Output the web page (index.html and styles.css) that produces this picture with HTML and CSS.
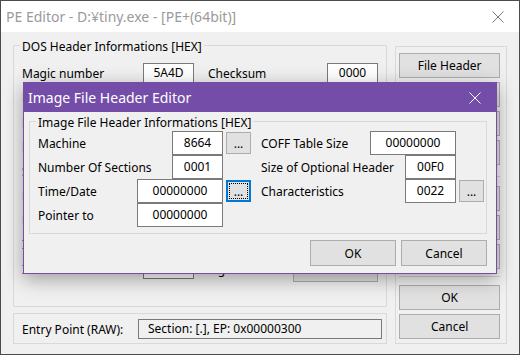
FILE: index.html
```html
<!DOCTYPE html>
<html lang="en">
<head>
<meta charset="UTF-8">
<title>PE Editor</title>
<link rel="stylesheet" href="styles.css">
</head>
<body>
<div class="window">
  <div class="titlebar">
    <span class="title">PE Editor - D:¥tiny.exe - [PE+(64bit)]</span>
    <svg class="close" width="12" height="12" viewBox="0 0 12 12"><path d="M0.5 0.5L11.5 11.5M11.5 0.5L0.5 11.5" stroke="#7a7a7a" stroke-width="1"/></svg>
  </div>
  <div class="client">
    <div class="main">
      <div class="group dos">
        <span class="group-title">DOS Header Informations [HEX]</span>
        <div class="dos-grid">
          <span>Magic number</span><span class="field">5A4D</span><span></span><span>Checksum</span><span class="field">0000</span>
          <span>Bytes on last page</span><span class="field">0090</span><span></span><span>Initial IP</span><span class="field">0000</span>
          <span>Pages in file</span><span class="field">0003</span><span></span><span>Initial CS</span><span class="field">0000</span>
          <span>Relocations</span><span class="field">0000</span><span></span><span>Relocation table</span><span class="field">0040</span>
          <span>Size of header</span><span class="field">0004</span><span></span><span>Overlay number</span><span class="field">0000</span>
          <span>Minimum memory</span><span class="field">0000</span><span></span><span>OEM identifier</span><span class="field">0000</span>
          <span>Maximum memory</span><span class="field">FFFF</span><span></span><span>OEM information</span><span class="field">0000</span>
          <span>Initial SS</span><span class="field">0000</span><span></span><span>PE header offset</span><span class="field">0080</span>
          <span>Initial SP</span><span class="field">00B8</span><span></span>
          <span class="last-right"><span>Signature</span><button class="btn rich">View Rich</button></span>
        </div>
      </div>
      <div class="group entry">
        <span class="entry-label">Entry Point (RAW):</span>
        <span class="textbox">Section: [.], EP: 0x00000300</span>
      </div>
    </div>
    <div class="group side">
      <button class="btn">File Header</button>
      <button class="btn">Optional Header</button>
      <button class="btn">Data Directories</button>
      <button class="btn">Section Headers</button>
      <div class="sep sep-a"></div>
      <button class="btn">Imports</button>
      <button class="btn">Exports</button>
      <button class="btn">Resources</button>
      <div class="sep sep-b"></div>
      <button class="btn">OK</button>
      <button class="btn">Cancel</button>
    </div>
  </div>

  <div class="dialog">
    <div class="dlg-titlebar">
      <span class="dlg-title">Image File Header Editor</span>
      <svg class="dlg-close" width="12" height="12" viewBox="0 0 12 12"><path d="M0.5 0.5L11.5 11.5M11.5 0.5L0.5 11.5" stroke="#fff" stroke-width="1"/></svg>
    </div>
    <div class="dlg-body">
      <div class="group dlg-group">
        <span class="group-title">Image File Header Informations [HEX]</span>
        <div class="dlg-cols">
          <div class="col-left">
            <div class="frow"><span class="flabel">Machine</span><span class="field w51">8664</span><button class="btn more">...</button></div>
            <div class="frow"><span class="flabel">Number Of Sections</span><span class="field w51">0001</span><span class="slot"></span></div>
            <div class="frow"><span class="flabel">Time/Date</span><span class="field w86">00000000</span><button class="btn more focus">...</button></div>
            <div class="frow"><span class="flabel">Pointer to</span><span class="field w86">00000000</span><span class="slot"></span></div>
          </div>
          <div class="col-right">
            <div class="frow"><span class="flabel">COFF Table Size</span><span class="field w86">00000000</span><span class="slot"></span></div>
            <div class="frow"><span class="flabel">Size of Optional Header</span><span class="field w51">00F0</span><span class="slot"></span></div>
            <div class="frow"><span class="flabel">Characteristics</span><span class="field w51">0022</span><button class="btn more">...</button></div>
          </div>
        </div>
      </div>
      <div class="dlg-actions">
        <button class="btn">OK</button>
        <button class="btn">Cancel</button>
      </div>
    </div>
  </div>
</div>
</body>
</html>
```

FILE: styles.css
```css
* {
  box-sizing: border-box;
}

body {
  margin: 0;
  font-family: "Noto Sans", sans-serif;
  font-size: 12px;
  color: #000;
  background: #fff;
}

.window {
  position: relative;
  width: 520px;
  height: 355px;
  border: 1px solid #4b4b4b;
  background: #f0f0f0;
  display: flex;
  flex-direction: column;
}

.titlebar {
  flex: none;
  height: 31px;
  background: #fff;
  display: flex;
  align-items: center;
  padding-left: 5px;
}

.title {
  flex: 1;
  font-size: 14px;
  color: #9a9a9a;
}

.close {
  margin-right: 15px;
}

.client {
  flex: 1;
  display: flex;
  gap: 8px;
  padding: 13px 12px 11px 12px;
}

.main {
  width: 375px;
  display: flex;
  flex-direction: column;
  gap: 6px;
}

.group {
  border: 1px solid #d9d9d9;
}

.group-title {
  display: block;
  width: fit-content;
  margin: -7px 0 0 6px;
  padding: 0 2px;
  line-height: 16px;
  background: #f0f0f0;
}

.btn {
  font: inherit;
  color: #000;
  background: #e1e1e1;
  border: 1px solid #adadad;
  padding: 0;
  height: 25px;
}

.field {
  display: block;
  height: 20px;
  line-height: 18px;
  border: 1px solid #7a7a7a;
  background: #fff;
  text-align: center;
}

/* DOS header group */
.dos {
  flex: 1;
}

.dos-grid {
  margin-top: 6px;
  padding: 0 8px;
  display: grid;
  grid-template-columns: 121px 51px 14px 119px 51px;
  grid-auto-rows: 24.5px;
  align-items: center;
}

.last-right {
  grid-column: 4 / 6;
  display: flex;
  align-items: center;
  justify-content: space-between;
}

.rich {
  width: 85px;
}

/* entry point */
.entry {
  flex: none;
  height: 31px;
  display: flex;
  align-items: center;
  padding: 1px 4px 0 8px;
}

.entry-label {
  width: 116px;
}

.textbox {
  flex: 1;
  height: 20px;
  line-height: 18px;
  border: 1px solid #7a7a7a;
  padding-left: 9px;
}

/* right side buttons */
.side {
  width: 112px;
  margin-top: 1px;
  padding: 6px 6px 0 3px;
  display: flex;
  flex-direction: column;
}

.side .btn {
  flex: none;
  margin-bottom: 4px;
}

.sep {
  height: 1px;
  background: #cfcfcf;
}

.sep-a {
  margin: 7px 0 9px;
}

.sep-b {
  margin: 3px 0 8px;
}

/* dialog */
.dialog {
  position: absolute;
  left: 22px;
  top: 81px;
  width: 474px;
  height: 192px;
  border: 1px solid #744da9;
  background: #f0f0f0;
  box-shadow: 0 5px 18px rgba(0, 0, 0, 0.35);
}

.dlg-titlebar {
  height: 29px;
  background: #744da9;
  color: #fff;
  display: flex;
  align-items: center;
  padding-left: 4px;
}

.dlg-title {
  flex: 1;
  font-size: 14px;
}

.dlg-close {
  margin-right: 15px;
}

.dlg-body {
  padding: 9px 9px 7px 5px;
}

.dlg-group {
  height: 113px;
}

.dlg-cols {
  display: flex;
  gap: 10px;
  padding-left: 8px;
}

.col-left {
  width: 213px;
}

.col-right {
  width: 223px;
}

.frow {
  display: flex;
  align-items: center;
  height: 24px;
}

.flabel {
  flex: 1;
}

.frow .field {
  height: 24px;
  line-height: 22px;
}

.w51 {
  width: 51px;
}

.w86 {
  width: 86px;
}

.more {
  width: 25px;
  height: 22px;
  margin-left: 3px;
}

.slot {
  width: 25px;
  margin-left: 3px;
}

.focus {
  border: 2px solid #0078d7;
  outline: 1px dotted #000;
  outline-offset: -4px;
}

.dlg-actions {
  display: flex;
  justify-content: flex-end;
  gap: 5px;
  margin-top: 6px;
}

.dlg-actions .btn {
  width: 86px;
  height: 26px;
}
```
